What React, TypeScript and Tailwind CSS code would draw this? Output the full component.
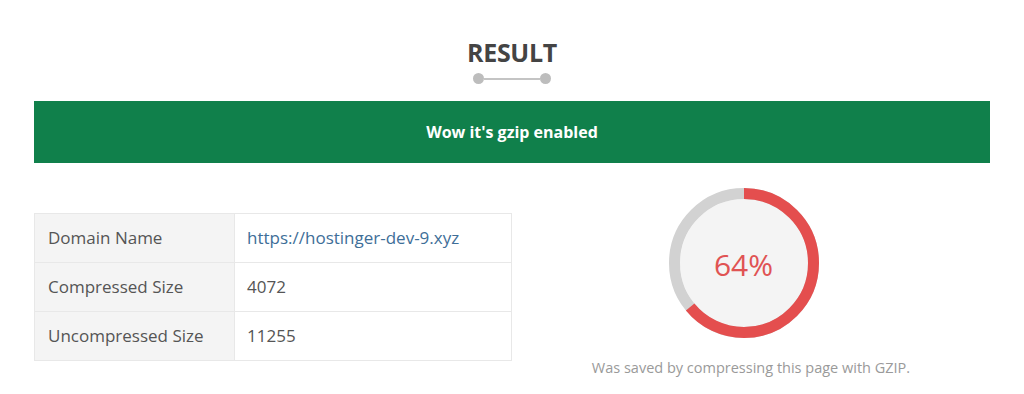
const rows = [
  { label: "Domain Name", value: "https://hostinger-dev-9.xyz", link: true },
  { label: "Compressed Size", value: "4072" },
  { label: "Uncompressed Size", value: "11255" },
];

function Gauge({ percent }: { percent: number }) {
  const r = 69.5;
  const c = 2 * Math.PI * r;
  return (
    <div className="relative w-[150px] h-[150px]">
      <svg width="150" height="150" viewBox="0 0 150 150">
        <circle cx="75" cy="75" r="64" fill="#f4f4f4" />
        <circle cx="75" cy="75" r={r} fill="none" stroke="#d2d2d2" strokeWidth="11" />
        <circle
          cx="75"
          cy="75"
          r={r}
          fill="none"
          stroke="#e44e4e"
          strokeWidth="11"
          strokeDasharray={`${(c * percent) / 100} ${c}`}
          transform="rotate(-90 75 75)"
        />
      </svg>
      <div className="absolute inset-0 flex items-center justify-center pt-[3px] text-[30px] text-[#e05353]">
        {percent}%
      </div>
    </div>
  );
}

export default function App() {
  return (
    <div className="w-[1024px] h-[394px] bg-white font-['Open_Sans',sans-serif] overflow-hidden">
      <div className="w-[956px] mx-auto pt-[35px]">
        <h2 className="text-center text-[25px] leading-[34px] font-bold text-[#444444] tracking-[-0.3px]">
          RESULT
        </h2>
        <div className="flex items-center justify-center mt-[4px]">
          <span className="w-[11px] h-[11px] rounded-full bg-[#bdbdbd]" />
          <span className="w-[56px] h-[2px] bg-[#c4c4c4]" />
          <span className="w-[11px] h-[11px] rounded-full bg-[#bdbdbd]" />
        </div>
        <div className="mt-[17px] h-[62px] bg-[#10804b] flex items-center justify-center text-white text-[16px] font-bold">
          Wow it's gzip enabled
        </div>
        <div className="flex mt-[25px]">
          <table className="w-[478px] mt-[25px] border-collapse text-[17px] text-[#555555] h-fit">
            <tbody>
              {rows.map((row) => (
                <tr key={row.label} className="h-[49px]">
                  <td className="w-[200px] bg-[#f4f4f4] border border-[#e8e8e8] px-[13px]">{row.label}</td>
                  <td className="bg-white border border-[#e8e8e8] px-[12px]">
                    {row.link ? <span className="text-[#3e6e98]">{row.value}</span> : row.value}
                  </td>
                </tr>
              ))}
            </tbody>
          </table>
          <div className="flex-1 flex flex-col items-center">
            <div className="mr-[15px]">
              <Gauge percent={64} />
            </div>
            <p className="mt-[19px] text-[14.5px] text-[#9a9a9a]">
              Was saved by compressing this page with GZIP.
            </p>
          </div>
        </div>
      </div>
    </div>
  );
}
